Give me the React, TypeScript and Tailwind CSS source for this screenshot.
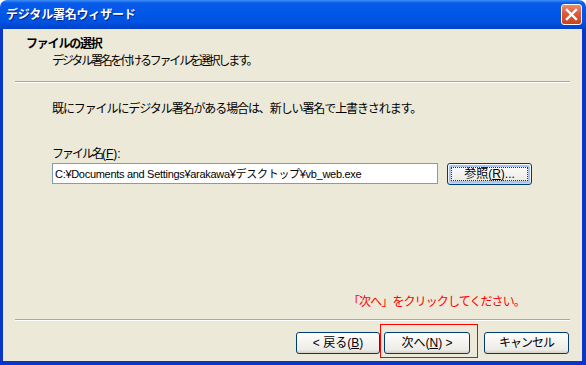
import React from 'react';

const font = "font-['Liberation_Sans','Noto_Sans_CJK_JP',sans-serif]";

const XpButton: React.FC<{ className?: string; focused?: boolean; children: React.ReactNode }> = ({
  className = '',
  focused = false,
  children,
}) => (
  <div
    className={`relative flex h-[22px] items-center justify-center rounded-[3px] border border-[#003C74] bg-[linear-gradient(to_bottom,#FFFFFF_0%,#F6F5F1_40%,#ECEBE6_85%,#D6D0C5_100%)] text-[12px] leading-[14px] text-black ${className}`}
  >
    {focused && (
      <div className="pointer-events-none absolute inset-[1px] rounded-[2px] border-2 border-[#A8C6F0]">
        <div className="absolute inset-[0px] border border-dotted border-[#333]" />
      </div>
    )}
    <span className="relative">{children}</span>
  </div>
);

const App: React.FC = () => {
  return (
    <div className={`h-[365px] w-[586px] bg-white ${font}`}>
      <div className="flex h-full flex-col">
        {/* title bar */}
        <div className="flex h-[29px] items-center justify-between rounded-t-[7px] bg-[linear-gradient(to_bottom,#3E90F9_0px,#0A5AE8_3px,#0058E8_12px,#0052E2_22px,#0041C8_29px)] pl-[6px] pr-[4px]">
          <span className="text-[12px] leading-[14px] font-bold tracking-[-0.2px] text-white [text-shadow:1px_1px_0_#0A1E80]">
            デジタル署名ウィザード
          </span>
          <div className="flex h-[21px] w-[21px] items-center justify-center rounded-[3px] border border-white bg-[linear-gradient(to_bottom,#EC8A6C_0%,#DE5A36_45%,#CC4220_100%)]">
            <svg width="13" height="13" viewBox="0 0 13 13">
              <path d="M2 2 L11 11 M11 2 L2 11" stroke="white" strokeWidth="2.4" strokeLinecap="square" />
            </svg>
          </div>
        </div>

        {/* body */}
        <div className="flex flex-1 flex-col border-b-[4px] border-l-[3px] border-r-[4px] border-[#0A36C8] bg-[#ECE9D8]">
          {/* header */}
          <div className="h-[52px] pt-[8px]">
            <div className="pl-[23px] text-[12px] leading-[14px] font-bold tracking-[-1.2px] text-black">ファイルの選択</div>
            <div className="mt-[3px] pl-[49px] text-[12px] leading-[14px] tracking-[-2.2px] text-black">
              デジタル署名を付けるファイルを選択します。
            </div>
          </div>
          <div className="mx-[12px] border-t border-b border-t-[#ACA899] border-b-white" />

          {/* content */}
          <div className="mt-[19px] pl-[49px] text-[12px] leading-[14px] tracking-[-1.1px] text-black">
            既にファイルにデジタル署名がある場合は、新しい署名で上書きされます。
          </div>
          <div className="mt-[31px] pl-[49px] text-[12px] leading-[14px] text-black">
            <span className="tracking-[-2px]">ファイル名</span>(<u>F</u>):
          </div>
          <div className="mt-[2px] flex items-start pl-[49px]">
            <div className="flex h-[21px] w-[386px] items-center border border-[#7F9DB9] bg-white px-[2px] text-[11px] leading-[14px] tracking-[-0.3px] text-black">
              C:¥Documents and Settings¥arakawa¥デスクトップ¥vb_web.exe
            </div>
            <XpButton focused className="ml-[9px] w-[85px]">
              参照(<u>R</u>)...
            </XpButton>
          </div>

          <div className="mt-[110px] pl-[345px] text-[12px] leading-[14px] tracking-[-0.9px] text-[#FF0000]">
            「次へ」をクリックしてください。
          </div>
          <div className="mx-[12px] mt-[10px] border-t border-b border-t-[#ACA899] border-b-white" />

          <div className="mt-[11px] flex pl-[293px]">
            <XpButton className="w-[84px]">
              &lt; 戻る(<u>B</u>)
            </XpButton>
            <div className="relative ml-[4px]">
              <XpButton className="w-[86px]">
                次へ(<u>N</u>) &gt;
              </XpButton>
              <div className="pointer-events-none absolute left-[-4px] top-[-8px] h-[34px] w-[98px] border border-[#FF0000]" />
            </div>
            <XpButton className="ml-[14px] w-[85px]">
              <span className="tracking-[-1px]">キャンセル</span>
            </XpButton>
          </div>
        </div>
      </div>
    </div>
  );
};

export default App;
